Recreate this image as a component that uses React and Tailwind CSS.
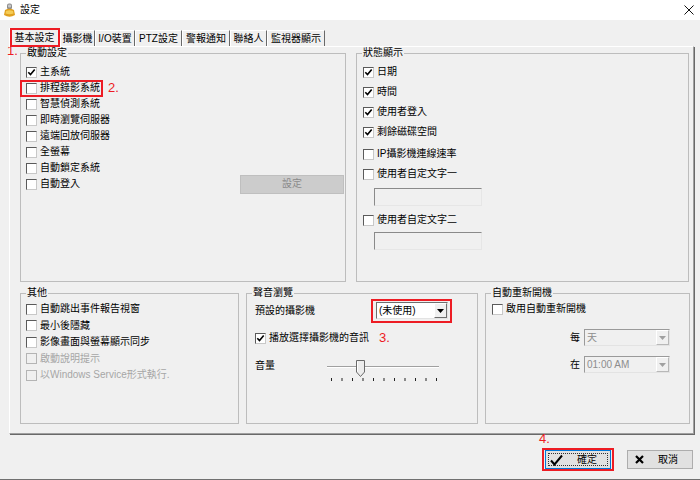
import React from "react";

function Box({ checked, disabled }) {
  return (
    <span
      className={
        "relative inline-block w-[11px] h-[11px] shrink-0 border " +
        (disabled
          ? "bg-[#f0f0f0] border-[#b4b4b4]"
          : "bg-white border-t-[#5a5a5a] border-l-[#5a5a5a] border-r-[#c8c8c8] border-b-[#c8c8c8]")
      }
    >
      {checked && (
        <svg className="absolute left-0 top-0" width="9" height="9" viewBox="0 0 9 9">
          <path d="M1.3 4.3 L3.5 6.6 L7.7 1.6" fill="none" stroke="#000" strokeWidth="1.6" />
        </svg>
      )}
    </span>
  );
}

function Row({ label, checked, disabled, className = "" }) {
  return (
    <div className={"flex items-center " + className}>
      <Box checked={checked} disabled={disabled} />
      <span className={"ml-[3px] whitespace-nowrap " + (disabled ? "text-[#a6a6a6]" : "text-black")}>{label}</span>
    </div>
  );
}

function Group({ title, className, children }) {
  return (
    <fieldset className={"min-w-0 shrink-0 border border-[#bdbdbd] " + className}>
      <legend className="ml-[5px] px-[1px] leading-[12px] text-black">{title}</legend>
      {children}
    </fieldset>
  );
}

function TextBox() {
  return (
    <div className="w-[108px] h-[18px] bg-[#f0f0f0] border border-t-[#8a8a8a] border-l-[#8a8a8a] border-r-[#e6e6e6] border-b-[#e6e6e6]" />
  );
}

function Combo({ text, disabled, className = "" }) {
  return (
    <div
      className={
        "flex h-[17px] border " +
        (disabled
          ? "bg-[#f0f0f0] border-t-[#9a9a9a] border-l-[#9a9a9a] border-r-[#e3e3e3] border-b-[#e3e3e3] text-[#8d8d8d] "
          : "bg-white border-t-[#6e6e6e] border-l-[#6e6e6e] border-r-[#e3e3e3] border-b-[#e3e3e3] text-black ") +
        className
      }
    >
      <span className="flex-1 pl-[2px] leading-[15px] whitespace-nowrap">{text}</span>
      <span
        className={
          "w-[13px] h-[15px] flex items-center justify-center border " +
          (disabled
            ? "border-t-white border-l-white border-r-[#b8b8b8] border-b-[#b8b8b8] bg-[#f0f0f0]"
            : "border-t-white border-l-white border-r-[#6e6e6e] border-b-[#6e6e6e] bg-[#f0f0f0]")
        }
      >
        <svg width="7" height="4" viewBox="0 0 7 4">
          <path d="M0 0 H7 L3.5 4 Z" fill={disabled ? "#a0a0a0" : "#000"} />
        </svg>
      </span>
    </div>
  );
}

function Slider() {
  const ticks = [];
  for (let i = 0; i < 11; i++) {
    const x = 5.5 + i * 10.5;
    ticks.push(<line key={i} x1={x} y1="20" x2={x} y2="23" stroke="#222" strokeWidth="1" />);
  }
  return (
    <svg width="116" height="25" viewBox="0 0 116 25" className="block">
      <line x1="1" y1="8.5" x2="113" y2="8.5" stroke="#a0a0a0" />
      <line x1="1" y1="9.5" x2="113" y2="9.5" stroke="#ffffff" />
      <polygon points="30.5,2.5 38.5,2.5 38.5,14 34.5,18.5 30.5,14" fill="#ececec" stroke="#6a6a6a" />
      <line x1="31.5" y1="3.5" x2="31.5" y2="13.5" stroke="#fff" />
      {ticks}
    </svg>
  );
}

const tabs = [
  ["攝影機", "w-[35px]"],
  ["I/O裝置", "w-[40px]"],
  ["PTZ設定", "w-[47px]"],
  ["警報通知", "w-[48px]"],
  ["聯絡人", "w-[37px]"],
  ["監視器顯示", "w-[58px]"],
];

export default function App() {
  return (
    <div className="relative w-[700px] h-[480px] overflow-hidden bg-[#f0f0f0] text-[10px] leading-[12px] text-black font-['Liberation_Sans','Noto_Sans_CJK_TC',sans-serif] border-b border-[#707070]">
      {/* title bar */}
      <div className="h-[20px] bg-white flex items-center justify-between pl-[3px] pr-[6px]">
        <div className="flex items-center">
          <svg width="13" height="15" viewBox="0 0 13 15">
            <rect x="4" y="0.5" width="5" height="6" rx="2" fill="#8c8c8c" />
            <rect x="5" y="1.5" width="3" height="3" rx="1" fill="#c8c8c8" />
            <path d="M2 7 Q6.5 4.5 11 7 L12 12 Q6.5 15.5 1 12 Z" fill="#e0a020" />
            <path d="M3 8 Q6.5 6.5 10 8 L10.5 10.5 Q6.5 12 2.5 10.5 Z" fill="#f5cc55" />
          </svg>
          <span className="ml-[4px]">設定</span>
        </div>
        <svg width="10" height="10" viewBox="0 0 10 10">
          <path d="M0.5 0.5 L9.5 9.5 M9.5 0.5 L0.5 9.5" stroke="#111" strokeWidth="1" />
        </svg>
      </div>

      {/* tabs */}
      <div className="mt-[8px] h-[18px] pl-[9px] flex items-end">
        <div className="relative z-10 -mb-[1px] w-[51px] h-[19px] bg-[#f0f0f0] border-t border-l border-r border-t-white border-l-white border-r-[#696969] flex items-center justify-center">
          <span className="whitespace-nowrap">基本設定</span>
          <span className="absolute left-[0px] -top-[1px] w-[50px] h-[19px] border-2 border-[#ed1c24]" />
        </div>
        {tabs.map(([t, w]) => (
          <div
            key={t}
            className={"h-[16px] border-t border-l border-r border-t-white border-l-white border-r-[#696969] flex items-center justify-center " + w}
          >
            <span className="whitespace-nowrap">{t}</span>
          </div>
        ))}
      </div>

      {/* panel */}
      <div className="ml-[9px] w-[685px] h-[388px] border border-t-white border-l-white border-r-[#a0a0a0] border-b-[#a0a0a0] shadow-[1px_1px_0_#696969] pl-[10px]">
        <div className="flex gap-[10px]">
          <Group title="啟動設定" className="w-[326px] h-[235px]">
            <div className="pl-[5px] pt-[5px] pr-[1px]">
              <Row className="h-[16px]" label="主系統" checked />
              <div className="flex items-center h-[16px]">
                <div className="relative inline-flex">
                  <Row className="h-[16px]" label="排程錄影系統" />
                  <span className="absolute -left-[6px] -right-[3px] top-0 -bottom-[1px] border-2 border-[#ed1c24]" />
                </div>
                <span className="ml-[8px] text-[13px] leading-[14px] text-[#ed1c24]">2.</span>
              </div>
              <Row className="h-[16px]" label="智慧偵測系統" />
              <Row className="h-[16px]" label="即時瀏覽伺服器" />
              <Row className="h-[16px]" label="遠端回放伺服器" />
              <Row className="h-[16px]" label="全螢幕" />
              <Row className="h-[16px]" label="自動鎖定系統" />
              <div className="flex items-center justify-between h-[16px]">
                <Row label="自動登入" />
                <div className="w-[104px] h-[19px] bg-[#cccccc] border border-[#bfbfbf] flex items-center justify-center text-[#8a8a8a]">設定</div>
              </div>
            </div>
          </Group>

          <Group title="狀態顯示" className="w-[333px] h-[235px]">
            <div className="pl-[6px] pt-[5px]">
              <Row className="h-[16px]" label="日期" checked />
              <Row className="h-[16px] mt-[4px]" label="時間" checked />
              <Row className="h-[16px] mt-[4px]" label="使用者登入" checked />
              <Row className="h-[16px] mt-[4px]" label="剩餘磁碟空間" checked />
              <Row className="h-[16px] mt-[6px]" label="IP攝影機連線速率" />
              <Row className="h-[16px] mt-[4px]" label="使用者自定文字一" />
              <div className="ml-[11px] mt-[6px]"><TextBox /></div>
              <Row className="h-[16px] mt-[6px]" label="使用者自定文字二" />
              <div className="ml-[11px] mt-[4px]"><TextBox /></div>
            </div>
          </Group>
        </div>

        <div className="flex gap-[7px] mt-[5px]">
          <Group title="其他" className="w-[219px] h-[137px]">
            <div className="pl-[5px] pt-[2px]">
              <Row className="h-[16px]" label="自動跳出事件報告視窗" />
              <Row className="h-[17px]" label="最小後隱藏" />
              <Row className="h-[16px]" label="影像畫面與螢幕顯示同步" />
              <Row className="h-[17px]" label="啟動說明提示" disabled />
              <Row className="h-[16px]" label="以Windows Service形式執行." disabled />
            </div>
          </Group>

          <Group title="聲音瀏覽" className="w-[232px] h-[137px]">
            <div className="pl-[8px] pt-[3px]">
              <div className="flex items-center h-[17px]">
                <span className="w-[121px] whitespace-nowrap">預設的攝影機</span>
                <div className="relative">
                  <Combo text="(未使用)" className="w-[72px]" />
                  <span className="absolute -left-[5px] -right-[4px] -top-[3px] -bottom-[4px] border-2 border-[#ed1c24]" />
                </div>
              </div>
              <div className="flex items-center h-[16px] mt-[11px]">
                <Row label="播放選擇攝影機的音訊" checked />
                <span className="ml-[10px] text-[13px] leading-[14px] text-[#ed1c24]">3.</span>
              </div>
              <div className="flex items-start mt-[12px]">
                <span className="w-[71px] leading-[16px]">音量</span>
                <Slider />
              </div>
            </div>
          </Group>

          <Group title="自動重新開機" className="w-[205px] h-[137px]">
            <div className="pl-[6px] pt-[2px]">
              <Row className="h-[16px]" label="啟用自動重新開機" />
              <div className="flex items-center justify-end gap-[4px] pr-[19px] mt-[12px]">
                <span>每</span>
                <Combo text="天" disabled className="w-[86px]" />
              </div>
              <div className="flex items-center justify-end gap-[4px] pr-[19px] mt-[10px]">
                <span>在</span>
                <Combo text="01:00 AM" disabled className="w-[86px]" />
              </div>
            </div>
          </Group>
        </div>
      </div>

      {/* buttons */}
      <div className="flex justify-end gap-[16px] pr-[7px] mt-[16px]">
        <div className="relative w-[66px] h-[19px] bg-[#e1e1e1] border border-[#0078d7] flex items-center pl-[4px]">
          <span className="absolute inset-[2px] border border-dotted border-[#333]" />
          <svg width="13" height="12" viewBox="0 0 13 12">
            <path d="M1 6.5 L4.5 10.5 L12 1.5" fill="none" stroke="#000" strokeWidth="2" />
          </svg>
          <span className="ml-[14px]">確定</span>
          <span className="absolute -left-[4px] -right-[4px] -top-[3px] -bottom-[3px] border-2 border-[#ed1c24]" />
          <span className="absolute -left-[7px] -top-[19px] text-[13px] leading-[14px] text-[#ed1c24]">4.</span>
        </div>
        <div className="w-[66px] h-[19px] bg-[#e1e1e1] border border-[#adadad] flex items-center pl-[7px]">
          <svg width="9" height="9" viewBox="0 0 9 9">
            <path d="M1 1 L8 8 M8 1 L1 8" stroke="#000" strokeWidth="2.2" />
          </svg>
          <span className="ml-[14px]">取消</span>
        </div>
      </div>

      <span className="absolute left-[7px] top-[44px] text-[13px] leading-[14px] text-[#ed1c24]">1.</span>
    </div>
  );
}
